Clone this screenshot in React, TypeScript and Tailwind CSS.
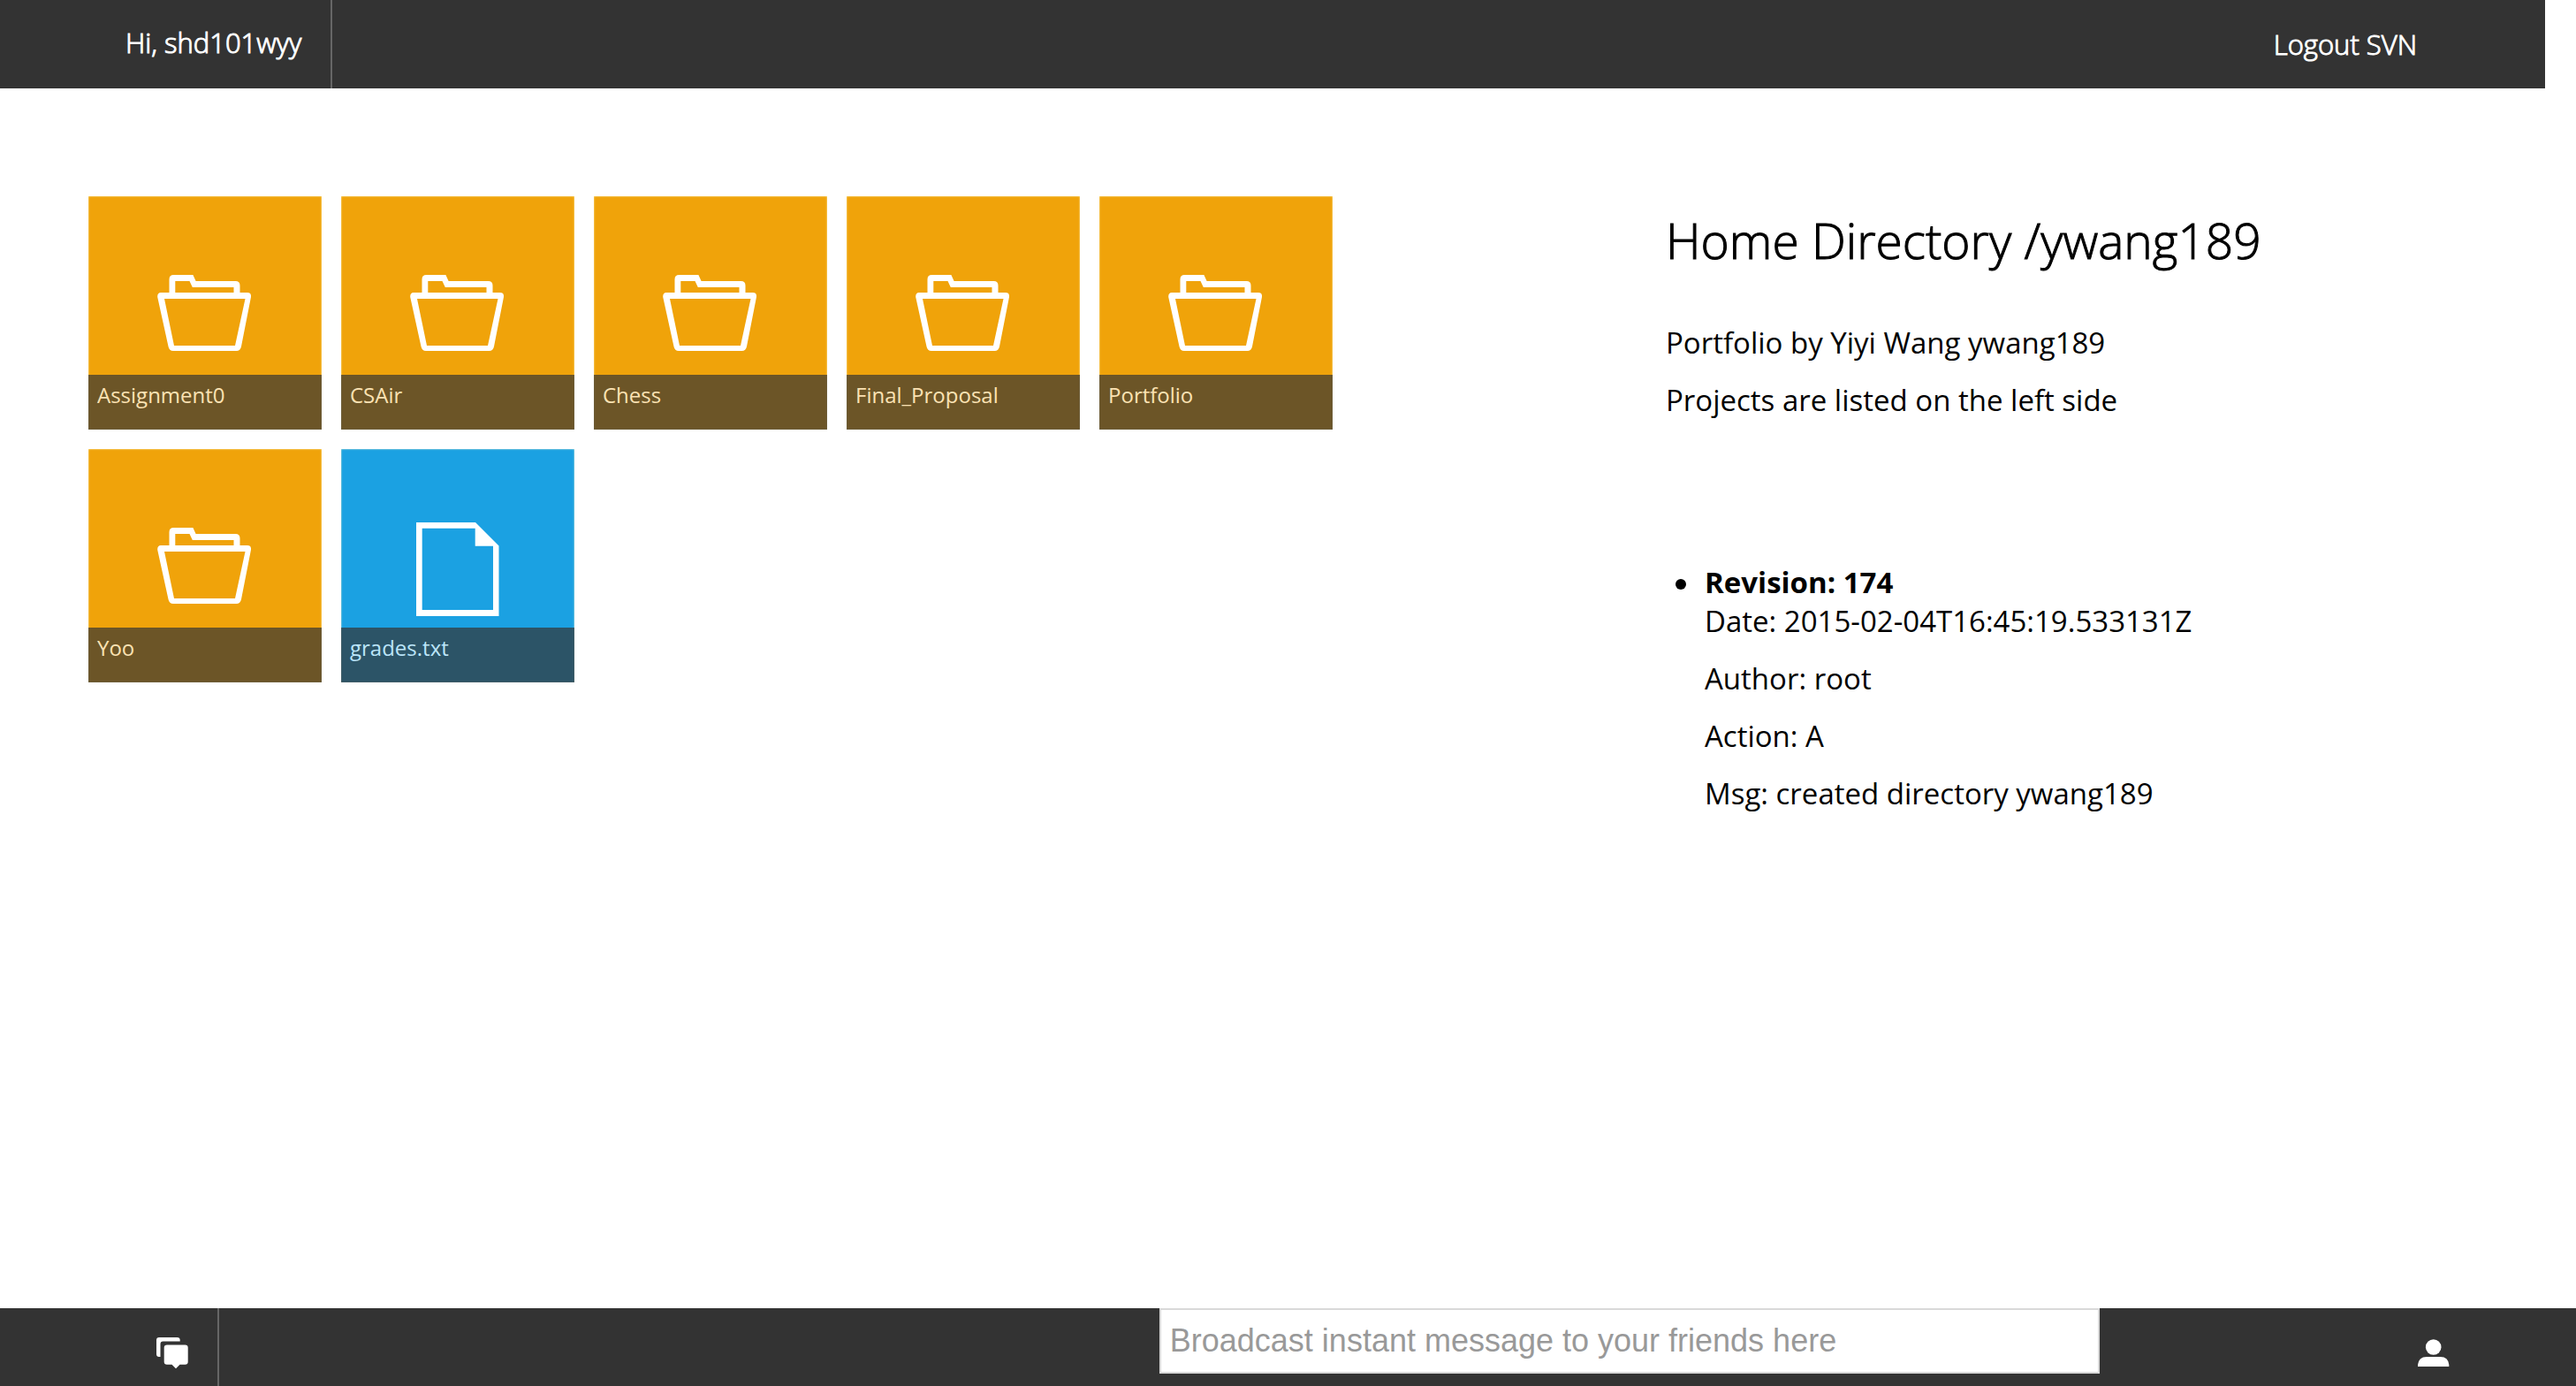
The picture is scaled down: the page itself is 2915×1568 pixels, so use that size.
type Entry = { name: string; kind: "folder" | "file" };

const entries: Entry[] = [
  { name: "Assignment0", kind: "folder" },
  { name: "CSAir", kind: "folder" },
  { name: "Chess", kind: "folder" },
  { name: "Final_Proposal", kind: "folder" },
  { name: "Portfolio", kind: "folder" },
  { name: "Yoo", kind: "folder" },
  { name: "grades.txt", kind: "file" },
];

function FolderIcon() {
  return (
    <svg viewBox="0 0 106 86" className="h-[86px] w-[106px]" fill="#fff" fillRule="evenodd" aria-hidden="true">
      <path d="M13.5 20V5Q13.5 0 18.5 0H40.4L43.6 7H88.5Q93.5 7 93.5 12V20ZM20.3 20H86.5V14H39.8L36.5 7H20.3Z" />
      <path d="M4 20H102Q106.5 20 106 25L95 81Q94 86 89.5 86H18Q13.5 86 12.5 81L0.2 25Q0 20 4 20ZM8 27L19 80H88L99.5 27Z" />
    </svg>
  );
}

function FileIcon() {
  return (
    <svg viewBox="0 0 94 106" className="h-[106px] w-[94px]" fill="#fff" fillRule="evenodd" aria-hidden="true">
      <path d="M0 0H67L93.5 26.5V106H0ZM6.7 6.7V99H87V26.7H66.7V6.7Z" />
    </svg>
  );
}

function ChatIcon() {
  return (
    <svg viewBox="0 0 36 36" className="size-9" fill="#fff" aria-hidden="true">
      <path d="M3 0H23.5Q26.7 0 26.7 3V4.5H7.5Q4.5 4.5 4.5 7.5V22H3Q0 22 0 19V3Q0 0 3 0Z" />
      <path d="M12 8.5H32.5Q35.7 8.5 35.7 11.5V27.7Q35.7 30.7 32.5 30.7H26.5L22 35.3L17.5 30.7H12Q8.7 30.7 8.7 27.7V11.5Q8.7 8.5 12 8.5Z" />
    </svg>
  );
}

function UserIcon() {
  return (
    <svg viewBox="0 0 36 32" className="h-8 w-9" fill="#fff" aria-hidden="true">
      <circle cx="17.7" cy="9" r="8.8" />
      <path d="M0 31V29Q1 20 10 20H25.5Q34.5 20 35.3 29V31Z" />
    </svg>
  );
}

function Tile({ entry }: { entry: Entry }) {
  const folder = entry.kind === "folder";
  return (
    <button
      type="button"
      className={`flex size-[264px] flex-col justify-end shadow-[inset_0_0_2px_#ffffcc] ${
        folder ? "bg-[#f0a30a] text-[#fbe2b3]" : "bg-[#1ba1e2] text-[#bbe5f9]"
      }`}
    >
      <span className={`flex w-full justify-center ${folder ? "pr-[2px] pb-[27px]" : "pb-[13px]"}`}>
        {folder ? <FolderIcon /> : <FileIcon />}
      </span>
      <span className="block h-[62px] w-full bg-[#333333]/70 px-[10px] pt-[5px] text-left text-[24px] leading-[36px]">
        {entry.name}
      </span>
    </button>
  );
}

export default function App() {
  return (
    <div className="flex min-h-screen flex-col bg-white font-['Open_Sans',sans-serif] text-black">
      <header className="mr-[35px] flex h-[100px] justify-between bg-[#333333] text-[31px] leading-10 font-light text-white [-webkit-text-stroke:1px_white]">
        <a href="#home" className="flex w-[376px] items-center border-r-2 border-[#666666] pb-1 pl-[142px]">
          Hi, shd101wyy
        </a>
        <a href="#logout" className="flex items-center pr-[145px]">
          Logout SVN
        </a>
      </header>

      <main className="grid flex-1 grid-cols-[1785fr_1030fr] content-start pt-[122px] pl-[100px]">
        <section aria-label="Files" className="flex max-w-[1408px] flex-wrap content-start gap-[22px]">
          {entries.map((entry) => (
            <Tile key={entry.name} entry={entry} />
          ))}
        </section>

        <section aria-label="Details" className="pt-[18px] text-[33px] leading-[44px]">
          <h1 className="text-[55px] leading-[64px] font-light [-webkit-text-stroke:1px_black]">
            Home Directory /ywang189
          </h1>
          <div className="mt-[62px] flex flex-col gap-[21px]">
            <p>Portfolio by Yiyi Wang ywang189</p>
            <p>Projects are listed on the left side</p>
          </div>
          <ul className="mt-[162px]">
            <li className="flex">
              <span className="flex h-[44px] w-[44px] shrink-0 items-center pt-[4px] pl-[11px]">
                <span className="size-[12px] rounded-full bg-black" />
              </span>
              <div>
                <strong className="block font-bold">Revision: 174</strong>
                <div className="flex flex-col gap-[21px]">
                  <p>Date: 2015-02-04T16:45:19.533131Z</p>
                  <p>Author: root</p>
                  <p>Action: A</p>
                  <p>Msg: created directory ywang189</p>
                </div>
              </div>
            </li>
          </ul>
        </section>
      </main>

      <footer className="flex h-[88px] items-start bg-[#333333]">
        <button
          type="button"
          aria-label="Chat"
          className="flex h-full items-start border-r-2 border-[#666666] pt-[33px] pr-[33px] pl-[177px]"
        >
          <ChatIcon />
        </button>
        <input
          type="text"
          aria-label="Broadcast message"
          placeholder="Broadcast instant message to your friends here"
          className="ml-auto h-[74px] w-[36.5%] border-2 border-[#d9d9d9] bg-white px-[10px] font-['Liberation_Sans',Arial,sans-serif] text-[36px] text-black placeholder:text-[#999999]"
        />
        <div className="flex w-[18.5%] justify-end pt-[35px] pr-[143px]">
          <button type="button" aria-label="Friends">
            <UserIcon />
          </button>
        </div>
      </footer>
    </div>
  );
}
